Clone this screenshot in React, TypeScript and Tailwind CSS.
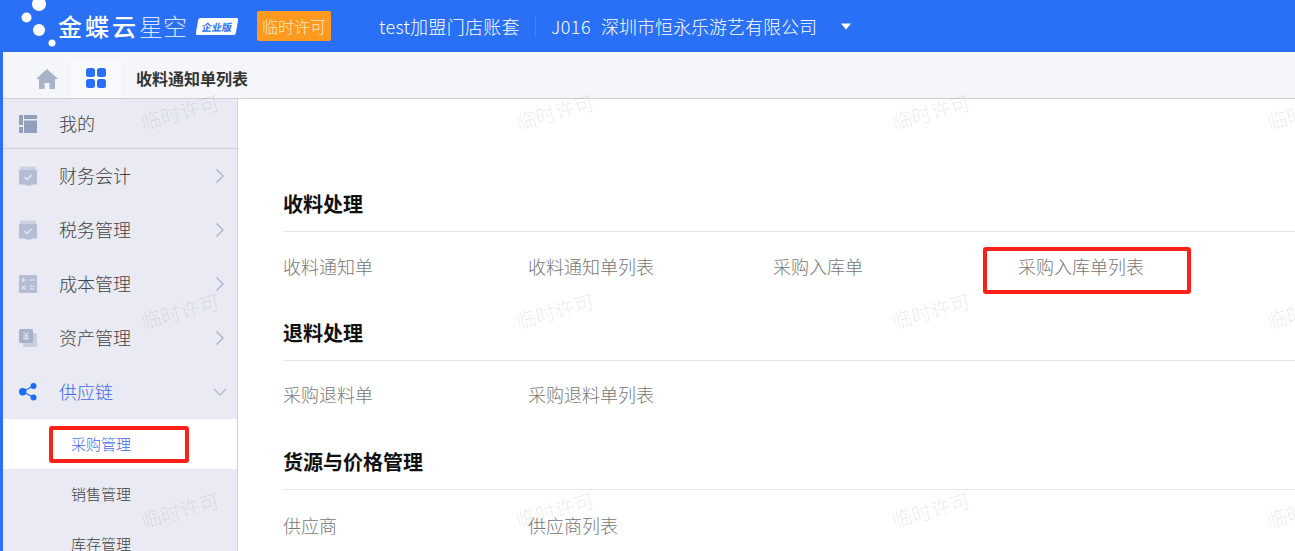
import React from "react";

const font = { fontFamily: '"Noto Sans CJK SC","Noto Sans",sans-serif' };

function Chevron({ down }: { down?: boolean }) {
  return (
    <svg width="14" height="16" viewBox="0 0 14 16" fill="none" className="ml-auto mr-[10px] shrink-0">
      {down ? (
        <path d="M1 5l6 6 6-6" stroke="#b4bccf" strokeWidth="1.4" />
      ) : (
        <path d="M3.5 1.5l6.5 6.5-6.5 6.5" stroke="#a9b3ca" strokeWidth="1.4" />
      )}
    </svg>
  );
}

function Mine() {
  return (
    <svg width="18" height="18" viewBox="0 0 18 18">
      <rect x="0" y="0" width="4" height="10" fill="#929fbb" />
      <rect x="0" y="12" width="4" height="6" fill="#929fbb" />
      <rect x="5" y="0" width="13" height="4" fill="#929fbb" />
      <rect x="5" y="5.500" width="13" height="12.500" fill="#929fbb" />
    </svg>
  );
}
function Receipt() {
  return (
    <svg width="18" height="20" viewBox="0 0 18 20">
      <path d="M1 0.500h16V4H1z" fill="#cdd2e2" />
      <path d="M0 4h18v14.500h-5l-1 1h-5l-1-1H0z" fill="#b4bdd3" />
      <path d="M5.500 11l2.500 2.500 4.500-4.500" stroke="#e9eaf3" strokeWidth="1.4" fill="none" />
    </svg>
  );
}
function Calc() {
  return (
    <svg width="18" height="18" viewBox="0 0 18 18">
      <rect width="18" height="18" rx="1" fill="#b4bdd3" />
      <path d="M2.500 5h4M4.500 3v4M11 5h4.500M2.800 11l3.400 3.400M6.200 11l-3.400 3.400M11 11.300h4.500M11 14h4.500" stroke="#e9eaf3" strokeWidth="1.100" />
    </svg>
  );
}
function Asset() {
  return (
    <svg width="18" height="18" viewBox="0 0 18 18">
      <rect x="4" y="4" width="14" height="14" rx="1.500" fill="#c9cfdf" />
      <rect x="0" y="0" width="14" height="14" rx="1.500" fill="#a7b1ca" />
      <path d="M4.500 3l2.500 3 2.500-3M4 7h6M4 9.500h6M7 6v5.500" stroke="#e9eaf3" strokeWidth="1" fill="none" />
    </svg>
  );
}
function Chain() {
  return (
    <svg width="18" height="18" viewBox="0 0 18 18">
      <path d="M3.700 8.700L14.300 3M3.700 8.700l10.600 5.600" stroke="#1a6cf6" strokeWidth="1.200" />
      <circle cx="3.700" cy="8.700" r="3.700" fill="#1a6cf6" />
      <circle cx="14.500" cy="3" r="3" fill="#1a6cf6" />
      <circle cx="14.500" cy="14.500" r="3" fill="#1a6cf6" />
    </svg>
  );
}

function NavItem({ icon, label, chevron, active, down }: { icon: React.ReactNode; label: string; chevron?: boolean; active?: boolean; down?: boolean }) {
  return (
    <div className="flex h-[54px] items-center pl-[16px]">
      <div className="flex w-[18px] items-center justify-center">{icon}</div>
      <span className={`ml-[22px] pb-[2px] text-[18px] font-light leading-none ${active ? "text-[#3f68ee]" : "text-[#444444]"}`}>{label}</span>
      {chevron && <Chevron down={down} />}
    </div>
  );
}

function Section({ title, items, rowClass }: { title: string; items: string[]; rowClass: string }) {
  return (
    <section className="h-[129px]">
      <h2 className="flex h-[47px] items-start pt-[10px] text-[20px] font-bold leading-none text-[#111111]">{title}</h2>
      <div className={`grid grid-cols-[245px_245px_245px_245px] border-t border-[#e6e6e6] text-[18px] font-light leading-[26px] text-[#777777] ${rowClass}`}>
        {items.map((t) => (
          <span key={t}>{t}</span>
        ))}
      </div>
    </section>
  );
}

function Watermarks() {
  const cells = Array.from({ length: 12 });
  return (
    <div className="pointer-events-none absolute left-[135px] top-[92px] grid grid-cols-[375.300px_375.300px_375.300px_375.300px] auto-rows-[199px]">
      {cells.map((_, i) => (
        <span key={i} className="h-[40px] w-[90px] origin-center rotate-[-15deg] text-center text-[20px] font-light leading-[40px] text-black/10">
          临时许可
        </span>
      ))}
    </div>
  );
}

export default function App() {
  return (
    <div className="relative flex h-[551px] w-[1295px] flex-col overflow-hidden bg-white" style={font}>
      <header className="flex h-[52px] shrink-0 items-center bg-[#2970f6] text-white">
        <svg width="50" height="48" viewBox="0 0 50 48" className="ml-[18px] shrink-0 self-start">
          <circle cx="21" cy="4" r="7" fill="#fff" />
          <circle cx="8.500" cy="17.500" r="5" fill="#fff" />
          <circle cx="21" cy="30" r="6" fill="#fff" />
          <circle cx="34" cy="43" r="3.500" fill="#fff" />
        </svg>
        <span className="ml-[-10px] text-[24px] font-medium leading-none tracking-[3px]">金蝶云</span>
        <span className="text-[24px] font-light leading-none text-[#dbe6ff]">星空</span>
        <span className="ml-[10px] flex h-[17px] w-[40px] skew-x-[-10deg] items-center justify-center rounded-[2px] bg-white text-[10px] font-bold leading-none text-[#2970f6]">企业版</span>
        <span className="ml-[20px] flex h-[30px] w-[74px] items-center justify-center rounded-[2px] bg-[#ff9a1e] text-[16px] font-light leading-none text-[#ffe6c4]">临时许可</span>
        <span className="ml-[48px] text-[18px] font-light leading-none tracking-[0.3px]">test加盟门店账套</span>
        <span className="ml-[15px] h-[22px] w-px bg-[#5a78ea]" />
        <span className="ml-[15px] text-[18px] font-light leading-none tracking-[0.5px]">J016</span>
        <span className="ml-[10px] text-[18px] font-light leading-none">深圳市恒永乐游艺有限公司</span>
        <svg width="12" height="7" viewBox="0 0 12 7" className="ml-[23px]">
          <path d="M1 0.500h10L6 6.500z" fill="#fff" />
        </svg>
      </header>

      <div className="flex min-h-0 flex-1 border-l-[3px] border-[#2970f6]">
        <div className="flex min-w-0 flex-1 flex-col">
          <div className="flex h-[47px] shrink-0 items-end border-b border-[#cfcfd4] bg-[#f5f6fa]">
            <div className="mb-[9px] ml-[33px]">
              <svg width="22" height="20" viewBox="0 0 22 20">
                <path d="M11 0L0 10h3v10h5.500v-6h5v6H19V10h3z" fill="#a8b2c9" />
              </svg>
            </div>
            <div className="ml-[13px] flex h-[40px] w-[50px] items-center justify-center rounded-t-[6px] bg-[#f9fafc]">
              <svg width="20" height="20" viewBox="0 0 20 20">
                <rect width="9" height="9" rx="2.500" fill="#2970f6" />
                <rect x="11" width="9" height="9" rx="2.500" fill="#2970f6" />
                <rect y="11" width="9" height="9" rx="2.500" fill="#2970f6" />
                <rect x="11" y="11" width="9" height="9" rx="2.500" fill="#2970f6" />
              </svg>
            </div>
            <span className="mb-[8px] ml-[15px] text-[16px] font-bold leading-[24px] text-[#333333]">收料通知单列表</span>
          </div>

          <div className="flex min-h-0 flex-1">
            <aside className="w-[235px] shrink-0 border-r border-[#cfcfd6] bg-[#e9eaf3]">
              <div className="flex h-[50px] items-center border-b border-[#cfcfd6] pl-[16px]">
                <Mine />
                <span className="ml-[22px] pb-[2px] text-[18px] font-light leading-none text-[#444444]">我的</span>
              </div>
              <NavItem icon={<Receipt />} label="财务会计" chevron />
              <NavItem icon={<Receipt />} label="税务管理" chevron />
              <NavItem icon={<Calc />} label="成本管理" chevron />
              <NavItem icon={<Asset />} label="资产管理" chevron />
              <NavItem icon={<Chain />} label="供应链" chevron active down />
              <div className="flex h-[50px] items-center bg-white pb-[2px] pl-[68px] text-[15px] font-light leading-none text-[#3f68ee]">采购管理</div>
              <div className="flex h-[50px] items-center pb-[2px] pl-[68px] text-[15px] font-light leading-none text-[#444444]">销售管理</div>
              <div className="flex h-[50px] items-center pb-[2px] pl-[68px] text-[15px] font-light leading-none text-[#444444]">库存管理</div>
            </aside>
            <main className="min-w-0 flex-1 pl-[45px] pt-[85px]">
              <Section rowClass="pt-[21px]" title="收料处理" items={["收料通知单", "收料通知单列表", "采购入库单", "采购入库单列表"]} />
              <Section rowClass="pt-[20px]" title="退料处理" items={["采购退料单", "采购退料单列表"]} />
              <Section rowClass="pt-[22px]" title="货源与价格管理" items={["供应商", "供应商列表"]} />
            </main>
          </div>
        </div>
      </div>

      <div className="absolute left-[49px] top-[426px] h-[37px] w-[140px] rounded-[3px] border-[4px] border-[#fb2117]" />
      <div className="absolute left-[983px] top-[247px] h-[47px] w-[208px] rounded-[3px] border-[4px] border-[#fb2117]" />
      <Watermarks />
    </div>
  );
}
